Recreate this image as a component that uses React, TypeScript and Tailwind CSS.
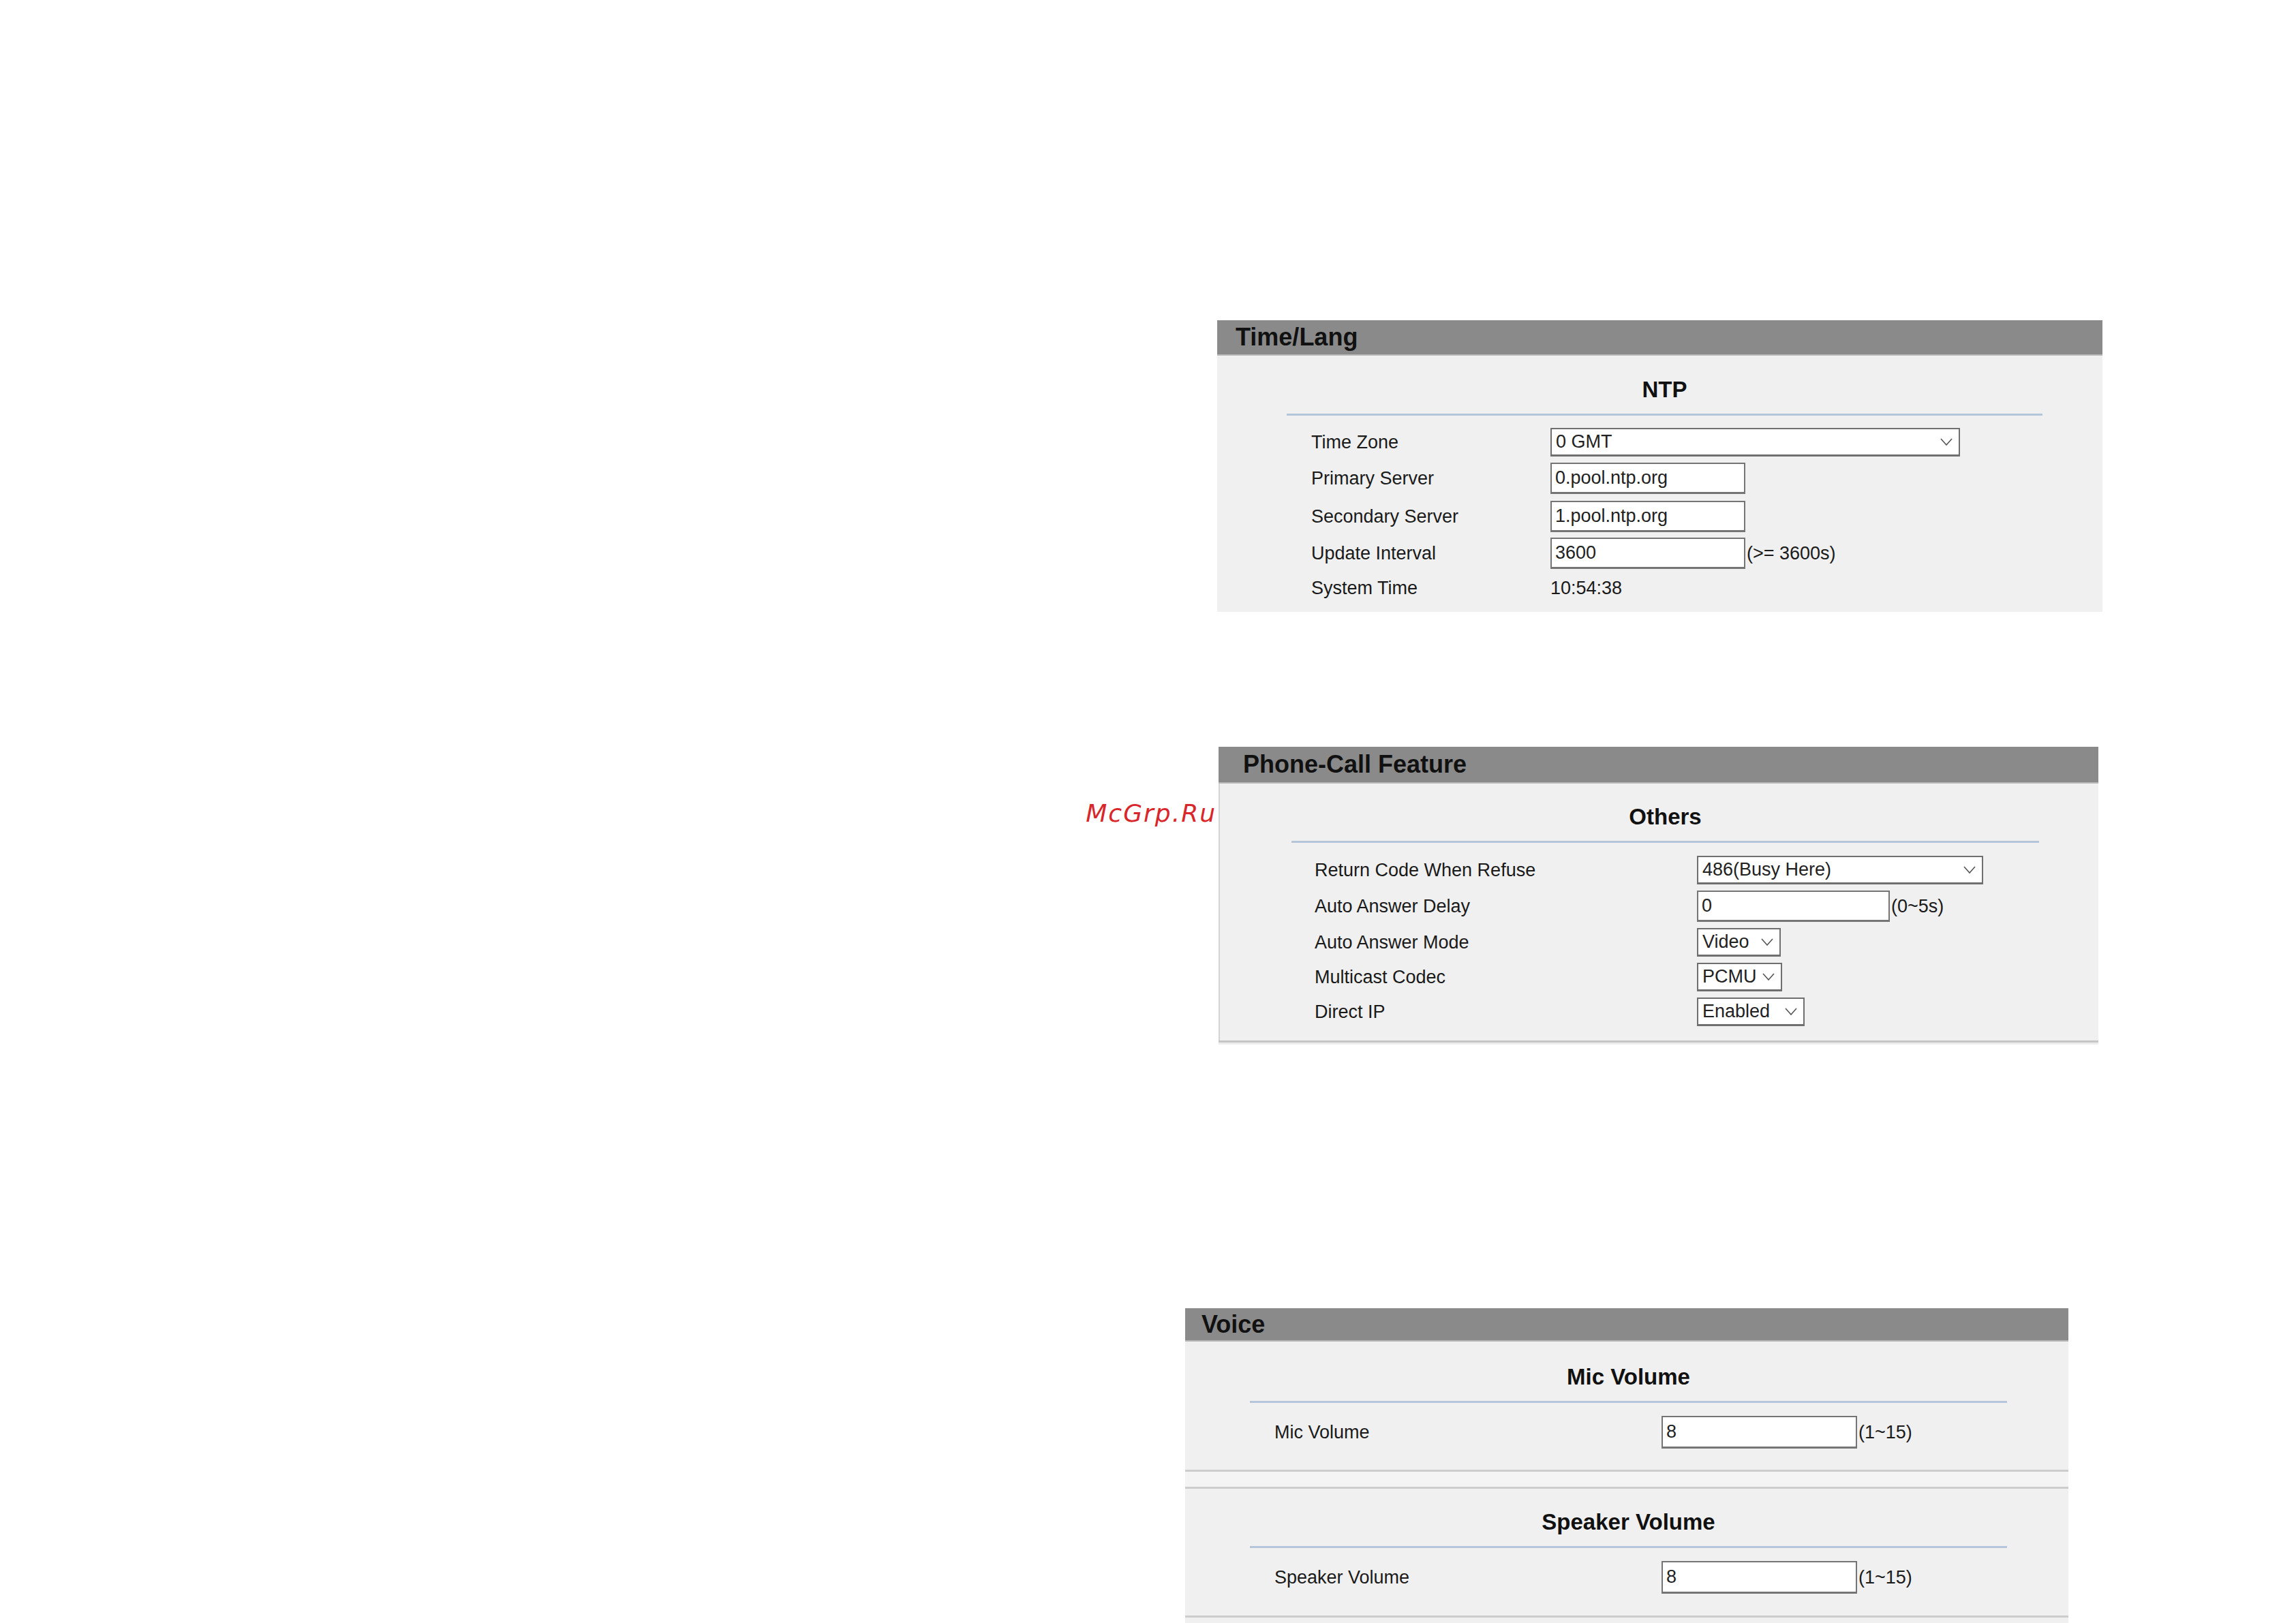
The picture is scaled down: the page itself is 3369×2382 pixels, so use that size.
import React from "react";

const FONT = { fontFamily: '"Liberation Sans", Arial, sans-serif' };

function Chevron() {
  return (
    <svg width="18" height="11" viewBox="0 0 18 11" className="shrink-0">
      <polyline points="1,1 9,10 17,1" fill="none" stroke="#555" strokeWidth="1.6" />
    </svg>
  );
}

function Select({ value, w }: { value: string; w: string }) {
  return (
    <div
      className={`${w} h-[42px] bg-white border-2 border-b-[3px] border-[#6f6f6f] flex items-center justify-between pl-[6px] pr-[9px] text-[27px] text-[#222] leading-none`}
    >
      <span>{value}</span>
      <Chevron />
    </div>
  );
}

function Input({ value, w, h = "h-[46px]" }: { value: string; w: string; h?: string }) {
  return (
    <div
      className={`${w} ${h} bg-white border-2 border-b-[3px] border-[#757575] flex items-center pl-[5px] text-[27px] text-[#222] leading-none`}
    >
      {value}
    </div>
  );
}

function Header({ title, h, pl }: { title: string; h: string; pl: string }) {
  return (
    <div className={`${h} ${pl} bg-[#8a8a8a] border-b-2 border-[#b8b8b8] flex items-center`}>
      <span className="text-[36px] font-bold text-[#111] leading-none">{title}</span>
    </div>
  );
}

function Title({ text, line }: { text: string; line: string }) {
  return (
    <div className={line}>
      <div className="text-center text-[33px] font-bold text-[#111] leading-[40px]">{text}</div>
      <div className="mt-[15px] h-[3px] bg-[#b5c6da]" />
    </div>
  );
}

function Row({
  label,
  labelX,
  ctrlX,
  mt,
  h,
  children,
}: {
  label: string;
  labelX: string;
  ctrlX: string;
  mt: string;
  h: string;
  children: React.ReactNode;
}) {
  return (
    <div className={`flex items-center ${mt} ${h}`}>
      <div className={`${labelX} ${ctrlX} text-[27px] text-[#1a1a1a] leading-none`}>{label}</div>
      <div className="flex items-center text-[27px] text-[#1a1a1a] leading-none">{children}</div>
    </div>
  );
}

export default function App() {
  return (
    <div className="relative w-[3369px] h-[2382px] bg-white overflow-hidden" style={FONT}>
      {/* Panel 1: Time/Lang */}
      <div className="ml-[1786px] pt-[470px] w-[1299px]">
        <Header title="Time/Lang" h="h-[52px]" pl="pl-[27px]" />
        <div className="h-[376px] bg-[#f0f0f0] pt-[30px]">
          <Title text="NTP" line="ml-[102px] w-[1109px]" />
          <Row label="Time Zone" labelX="pl-[138px]" ctrlX="w-[489px]" mt="mt-[18px]" h="h-[42px]">
            <Select value="0 GMT" w="w-[601px]" />
          </Row>
          <Row label="Primary Server" labelX="pl-[138px]" ctrlX="w-[489px]" mt="mt-[9px]" h="h-[46px]">
            <Input value="0.pool.ntp.org" w="w-[286px]" />
          </Row>
          <Row label="Secondary Server" labelX="pl-[138px]" ctrlX="w-[489px]" mt="mt-[10px]" h="h-[46px]">
            <Input value="1.pool.ntp.org" w="w-[286px]" />
          </Row>
          <Row label="Update Interval" labelX="pl-[138px]" ctrlX="w-[489px]" mt="mt-[8px]" h="h-[46px]">
            <Input value="3600" w="w-[286px]" />
            <span className="ml-[2px]">(&gt;= 3600s)</span>
          </Row>
          <Row label="System Time" labelX="pl-[138px]" ctrlX="w-[489px]" mt="mt-[8px]" h="h-[40px]">
            <span>10:54:38</span>
          </Row>
        </div>
      </div>

      {/* Row 2: watermark + Phone-Call Feature */}
      <div className="flex mt-[198px]">
        <div className="w-[1788px] flex justify-end items-start pt-[80px] pr-[3px]">
          <span
            className="text-[36px] italic text-[#d8262a] tracking-[2px] leading-none"
            style={{ fontFamily: '"DejaVu Sans", sans-serif' }}
          >
            McGrp.Ru
          </span>
        </div>
        <div className="w-[1291px]">
          <Header title="Phone-Call Feature" h="h-[54px]" pl="pl-[36px]" />
          <div className="h-[377px] bg-[#f0f0f0] border-l-2 border-[#d4d4d4] pt-[29px] relative">
            <Title text="Others" line="ml-[105px] w-[1097px]" />
            <Row label="Return Code When Refuse" labelX="pl-[139px]" ctrlX="w-[700px]" mt="mt-[19px]" h="h-[42px]">
              <Select value="486(Busy Here)" w="w-[420px]" />
            </Row>
            <Row label="Auto Answer Delay" labelX="pl-[139px]" ctrlX="w-[700px]" mt="mt-[9px]" h="h-[46px]">
              <Input value="0" w="w-[283px]" />
              <span className="ml-[2px]">(0~5s)</span>
            </Row>
            <Row label="Auto Answer Mode" labelX="pl-[139px]" ctrlX="w-[700px]" mt="mt-[9px]" h="h-[42px]">
              <Select value="Video" w="w-[123px]" />
            </Row>
            <Row label="Multicast Codec" labelX="pl-[139px]" ctrlX="w-[700px]" mt="mt-[9px]" h="h-[42px]">
              <Select value="PCMU" w="w-[125px]" />
            </Row>
            <Row label="Direct IP" labelX="pl-[139px]" ctrlX="w-[700px]" mt="mt-[9px]" h="h-[42px]">
              <Select value="Enabled" w="w-[158px]" />
            </Row>
          </div>
          <div className="h-[3px] bg-[#c6c6c6]" />
          <div className="h-[3px] bg-[#ececec]" />
        </div>
      </div>

      {/* Row 3: bottom artifacts + Voice */}
      <div className="flex mt-[387px] h-[464px] items-stretch">
        <div className="w-[1739px] flex items-end">
          <div className="flex items-end h-[2px] mb-0">
            <div className="w-[762px] h-[2px] bg-black" />
            <div className="ml-[2px] w-[2px] h-[2px] bg-[#1bb3c9]" />
            <div className="ml-[12px] w-[5px] h-[2px] bg-[#3a2a2a]" />
            <div className="ml-[17px] w-[2px] h-[2px] bg-[#c03040]" />
            <div className="ml-[4px] w-[2px] h-[2px] bg-[#2050c0]" />
            <div className="ml-[6px] w-[3px] h-[2px] bg-[#60a040]" />
            <div className="ml-[4px] w-[2px] h-[2px] bg-[#c040c0]" />
            <div className="ml-[5px] w-[3px] h-[2px] bg-[#3060d0]" />
            <div className="ml-[5px] w-[2px] h-[2px] bg-[#d0a020]" />
            <div className="ml-[4px] w-[30px] h-[2px] bg-[linear-gradient(90deg,#802040,#2040a0,#a04020,#204080,#c03030)]" />
          </div>
        </div>
        <div className="w-[1296px] overflow-hidden">
          <Header title="Voice" h="h-[49px]" pl="pl-[24px]" />
          <div className="bg-[#f0f0f0] pt-[32px] h-[188px]">
            <Title text="Mic Volume" line="ml-[95px] w-[1111px]" />
            <Row label="Mic Volume" labelX="pl-[131px]" ctrlX="w-[699px]" mt="mt-[19px]" h="h-[48px]">
              <Input value="8" w="w-[287px]" h="h-[48px]" />
              <span className="ml-[2px]">(1~15)</span>
            </Row>
          </div>
          <div className="h-[3px] bg-[#cdcdcd]" />
          <div className="h-[22px] bg-[#f4f4f4]" />
          <div className="h-[3px] bg-[#cdcdcd]" />
          <div className="bg-[#f0f0f0] pt-[29px] h-[186px]">
            <Title text="Speaker Volume" line="ml-[95px] w-[1111px]" />
            <Row label="Speaker Volume" labelX="pl-[131px]" ctrlX="w-[699px]" mt="mt-[19px]" h="h-[48px]">
              <Input value="8" w="w-[287px]" h="h-[48px]" />
              <span className="ml-[2px]">(1~15)</span>
            </Row>
          </div>
          <div className="h-[3px] bg-[#cdcdcd]" />
          <div className="h-[30px] bg-[#f0f0f0]" />
        </div>
      </div>
    </div>
  );
}
